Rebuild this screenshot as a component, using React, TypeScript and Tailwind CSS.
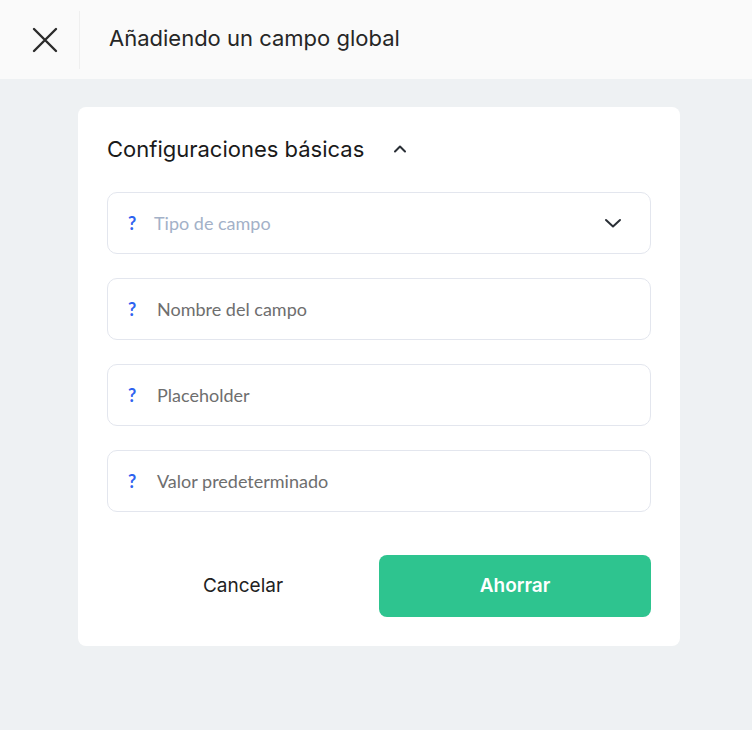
import React from "react";

function Field({ label, muted, select }: { label: string; muted?: boolean; select?: boolean }) {
  return (
    <div className="h-[62px] rounded-[10px] border border-[#e3e6ee] flex items-center pl-[20px] pr-[27px]">
      <span className="text-[#2f63f0] text-[18px] font-bold w-[22px]" style={{ fontFamily: "Lato, sans-serif" }}>?</span>
      <span
        className={`text-[18px] ${muted ? "text-[#a3b1c8] ml-[4px]" : "text-[#6e6e6e] ml-[7px]"} flex-1`}
        style={{ fontFamily: "Lato, sans-serif" }}
      >
        {label}
      </span>
      {select && (
        <svg width="20" height="20" viewBox="0 0 20 20" fill="none" stroke="#2a2f36" strokeWidth="2" strokeLinecap="round" strokeLinejoin="round">
          <path d="M3 7l7 6.5L17 7" />
        </svg>
      )}
    </div>
  );
}

export default function App() {
  return (
    <div className="w-[752px] h-[730px] bg-[#eef1f3] flex flex-col" style={{ fontFamily: "Inter, sans-serif" }}>
      <div className="h-[79px] bg-[#fafafa] flex items-center shrink-0">
        <div className="w-[80px] h-[58px] flex items-center pl-[32px] border-r border-[#efefef]">
          <svg width="26" height="26" viewBox="0 0 26 26" fill="none" stroke="#2b2b2b" strokeWidth="2.4" strokeLinecap="round">
            <path d="M2 2l22 22M24 2L2 24" />
          </svg>
        </div>
        <div className="ml-[29px] text-[22px] text-[#262626] -mt-[3px]">Añadiendo un campo global</div>
      </div>
      <div className="pt-[28px] pl-[78px]">
        <div className="w-[602px] bg-white rounded-[8px] px-[29px] pt-[25px] pb-[29px]">
          <div className="flex items-center h-[34px]">
            <span className="text-[22px] text-[#1a1a1a]">Configuraciones básicas</span>
            <svg className="ml-[28px]" width="16" height="16" viewBox="0 0 16 16" fill="none" stroke="#2a2f36" strokeWidth="2" strokeLinecap="round" strokeLinejoin="round">
              <path d="M3 10.5l5-5 5 5" />
            </svg>
          </div>
          <div className="mt-[26px] flex flex-col gap-[24px]">
            <Field label="Tipo de campo" muted select />
            <Field label="Nombre del campo" />
            <Field label="Placeholder" />
            <Field label="Valor predeterminado" />
          </div>
          <div className="mt-[43px] flex items-center">
            <div className="w-[272px] text-center text-[19px] text-[#222]">Cancelar</div>
            <button className="w-[272px] h-[62px] rounded-[8px] bg-[#2ec48f] text-white text-[19px] font-semibold">Ahorrar</button>
          </div>
        </div>
      </div>
    </div>
  );
}
